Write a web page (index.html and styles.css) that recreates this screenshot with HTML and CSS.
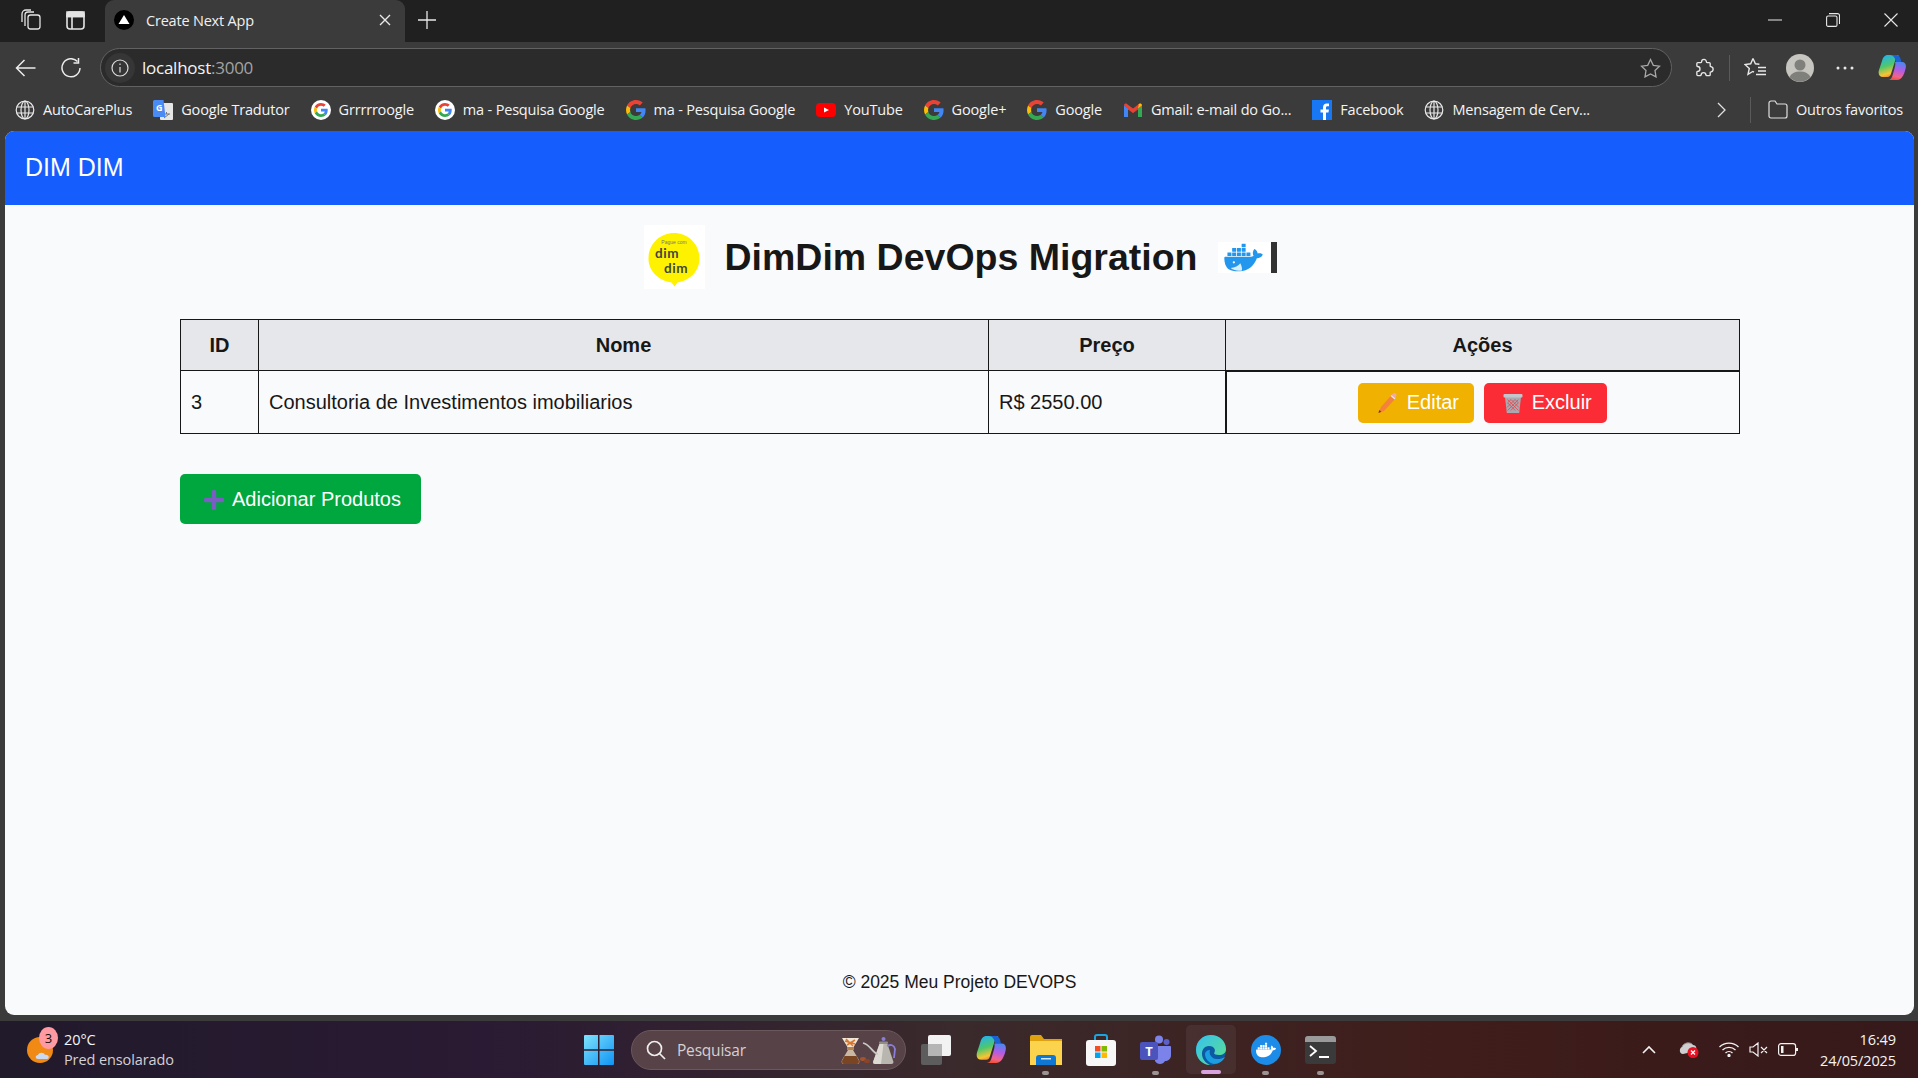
FILE: index.html
```html
<!DOCTYPE html>
<html lang="pt-BR">
<head>
    <meta charset="UTF-8">
    <meta name="viewport" content="width=device-width, initial-scale=1.0">
    <title>Create Next App</title>
    <link rel="stylesheet" href="styles.css">
</head>
<body>
    <svg class="sprites" width="0" height="0">
        <symbol id="g-logo" viewBox="0 0 48 48">
            <path fill="#EA4335" d="M24 9.5c3.54 0 6.71 1.22 9.21 3.6l6.85-6.85C35.9 2.38 30.47 0 24 0 14.62 0 6.51 5.38 2.56 13.22l7.98 6.19C12.43 13.72 17.74 9.5 24 9.5z"/>
            <path fill="#4285F4" d="M46.98 24.55c0-1.57-.15-3.09-.38-4.55H24v9.02h12.94c-.58 2.96-2.26 5.48-4.78 7.18l7.73 6c4.51-4.18 7.09-10.36 7.09-17.65z"/>
            <path fill="#FBBC05" d="M10.53 28.59c-.48-1.45-.76-2.99-.76-4.59s.27-3.14.76-4.59l-7.98-6.19C.92 16.46 0 20.12 0 24c0 3.88.92 7.54 2.56 10.78l7.97-6.19z"/>
            <path fill="#34A853" d="M24 48c6.48 0 11.93-2.13 15.89-5.81l-7.73-6c-2.15 1.45-4.92 2.3-8.16 2.3-6.26 0-11.57-4.22-13.47-9.91l-7.98 6.19C6.51 42.62 14.62 48 24 48z"/>
        </symbol>
        <symbol id="g-round" viewBox="0 0 20 20">
            <circle cx="10" cy="10" r="10" fill="#fff"/>
            <use href="#g-logo" x="3" y="3" width="14" height="14"/>
        </symbol>
        <symbol id="globe" viewBox="0 0 20 20">
            <g fill="none" stroke="#e8e8e8" stroke-width="1.2">
                <circle cx="10" cy="10" r="8.8"/>
                <ellipse cx="10" cy="10" rx="4" ry="8.8"/>
                <path d="M10 1.2v17.6M1.6 7h16.8M1.6 13h16.8"/>
            </g>
        </symbol>
        <symbol id="whale" viewBox="0 0 24 24">
            <path d="M13.983 11.078h2.119a.186.186 0 00.186-.185V9.006a.186.186 0 00-.186-.186h-2.119a.185.185 0 00-.185.185v1.888c0 .102.083.185.185.185m-2.954-5.43h2.118a.186.186 0 00.186-.186V3.574a.186.186 0 00-.186-.185h-2.118a.185.185 0 00-.185.185v1.888c0 .102.082.185.185.186m0 2.716h2.118a.187.187 0 00.186-.186V6.29a.186.186 0 00-.186-.185h-2.118a.185.185 0 00-.185.185v1.887c0 .102.082.185.185.186m-2.93 0h2.12a.186.186 0 00.184-.186V6.29a.185.185 0 00-.185-.185H8.1a.185.185 0 00-.185.185v1.887c0 .102.083.185.185.186m-2.964 0h2.119a.186.186 0 00.185-.186V6.29a.185.185 0 00-.185-.185H5.136a.186.186 0 00-.186.185v1.887c0 .102.084.185.186.186m5.893 2.715h2.118a.186.186 0 00.186-.185V9.006a.186.186 0 00-.186-.186h-2.118a.185.185 0 00-.185.185v1.888c0 .102.082.185.185.185m-2.93 0h2.12a.185.185 0 00.184-.185V9.006a.185.185 0 00-.184-.186h-2.12a.185.185 0 00-.184.185v1.888c0 .102.083.185.185.185m-2.964 0h2.119a.185.185 0 00.185-.185V9.006a.185.185 0 00-.184-.186h-2.12a.186.186 0 00-.186.186v1.887c0 .102.084.185.186.185m-2.92 0h2.12a.185.185 0 00.184-.185V9.006a.185.185 0 00-.184-.186h-2.12a.185.185 0 00-.185.185v1.888c0 .102.082.185.185.185M23.763 9.89c-.065-.051-.672-.51-1.954-.51-.338.001-.676.03-1.01.087-.248-1.7-1.653-2.53-1.716-2.566l-.344-.199-.226.327c-.284.438-.49.922-.612 1.43-.23.97-.09 1.882.403 2.661-.595.332-1.55.413-1.744.42H.751a.751.751 0 00-.75.748 11.376 11.376 0 00.692 4.062c.545 1.428 1.355 2.48 2.41 3.124 1.18.723 3.1 1.137 5.275 1.137.983.003 1.963-.086 2.93-.266a12.248 12.248 0 003.823-1.389c.98-.567 1.86-1.288 2.61-2.136 1.252-1.418 1.998-2.997 2.553-4.4h.221c1.372 0 2.215-.549 2.68-1.009.309-.293.55-.65.707-1.046l.098-.288Z"/>
        </symbol>
        <linearGradient id="copilot-a" x1="0.2" y1="0" x2="0.5" y2="1">
            <stop offset="0" stop-color="#1fb2f6"/>
            <stop offset=".5" stop-color="#4fc76c"/>
            <stop offset=".85" stop-color="#f7c531"/>
            <stop offset="1" stop-color="#f08a3c"/>
        </linearGradient>
        <linearGradient id="copilot-b" x1="0.6" y1="0" x2="0.4" y2="1">
            <stop offset="0" stop-color="#4d86f2"/>
            <stop offset=".45" stop-color="#b65be2"/>
            <stop offset=".8" stop-color="#f0658a"/>
            <stop offset="1" stop-color="#f1503a"/>
        </linearGradient>
        <symbol id="copilot" viewBox="0 0 28 27">
            <path fill="url(#copilot-a)" d="M10 1C6.500 1 5 3.500 4 7L1 16c-1.200 4 .3 7 4 7h4.500c2 0 3-1.500 3.600-3.500L17 7c.8-3 2-5 4-6z"/>
            <path fill="#1a62d6" d="M12 1h6c3 0 4.500 2 5.300 7H18c-1-4-2.500-7-6-7z"/>
            <path fill="url(#copilot-b)" d="M17 8h7c3 0 4.300 2.500 3.800 5.500C27 18 24.500 26 19 26h-9c2.500 0 3.800-2 4.500-4.500l2-7c.5-2 1.300-4.500.5-6.500z"/>
        </symbol>
    </svg>

    <div class="tabstrip">
        <span class="slot">
            <svg width="22" height="22" viewBox="0 0 22 22" fill="none" stroke="#e4e4e4" stroke-width="1.3"><rect x="8" y="6" width="12" height="14" rx="2.500"/><path d="M5 17V6a3 3 0 013-3h6M2 13V5a4 4 0 014-4h5"/></svg>
        </span>
        <span class="slot">
            <svg width="19" height="19" viewBox="0 0 19 19" fill="none" stroke="#e4e4e4" stroke-width="1.6"><rect x="1" y="1" width="17" height="17" rx="3"/><path d="M1 5.500h17M6 5.500V18"/><path d="M1 1h17v4.500H1z" fill="#e4e4e4"/></svg>
        </span>
        <div class="tab">
            <svg class="tab-icon" width="20" height="20" viewBox="0 0 20 20"><circle cx="10" cy="10" r="10" fill="#000"/><path d="M10 5l5.500 9h-11z" fill="#fff"/></svg>
            <span class="tab-title">Create Next App</span>
            <svg width="12" height="12" viewBox="0 0 12 12" stroke="#e8e8e8" stroke-width="1.400"><path d="M1 1l10 10M11 1L1 11"/></svg>
        </div>
        <span class="slot new-tab">
            <svg width="18" height="18" viewBox="0 0 18 18" stroke="#e8e8e8" stroke-width="1.300"><path d="M9 0v18M0 9h18"/></svg>
        </span>
        <div class="spacer"></div>
        <div class="window-controls">
            <span class="win-btn"><svg width="14" height="2" viewBox="0 0 14 2" stroke="#e8e8e8"><path d="M0 1h14"/></svg></span>
            <span class="win-btn"><svg width="14" height="14" viewBox="0 0 14 14" fill="none" stroke="#e8e8e8" stroke-width="1.100"><rect x=".6" y="3" width="10.400" height="10.400" rx="1.500"/><path d="M3 .6h8.500a2 2 0 012 2V11"/></svg></span>
            <span class="win-btn"><svg width="14" height="14" viewBox="0 0 14 14" stroke="#e8e8e8" stroke-width="1.100"><path d="M.5.500l13 13M13.500.500l-13 13"/></svg></span>
        </div>
    </div>

    <div class="toolbar">
        <span class="slot">
            <svg width="21" height="18" viewBox="0 0 21 18" fill="none" stroke="#ececec" stroke-width="1.500"><path d="M20.500 9H1.500M9.500 1l-8 8 8 8"/></svg>
        </span>
        <span class="slot">
            <svg width="20" height="20" viewBox="0 0 20 20" fill="none" stroke="#ececec" stroke-width="1.500"><path d="M16.500 3.500A9 9 0 1019 10"/><path d="M17.500 0v5h-5"/></svg>
        </span>
        <div class="address">
            <span class="site-info">
                <svg width="18" height="18" viewBox="0 0 18 18" fill="none" stroke="#dcdcdc" stroke-width="1.200"><circle cx="9" cy="9" r="8"/><path d="M9 8v5.500M9 4.500v1.500"/></svg>
            </span>
            <span class="url">localhost<span class="url-port">:3000</span></span>
            <svg class="addr-star" width="21" height="20" viewBox="0 0 21 20" fill="none" stroke="#a8a8a8" stroke-width="1.300"><path d="M10.500 1.500l2.800 5.800 6.200.9-4.500 4.400 1 6.300-5.500-3-5.500 3 1-6.300-4.500-4.400 6.200-.9z"/></svg>
        </div>
        <div class="toolbar-right">
            <span class="slot">
                <svg width="20" height="20" viewBox="0 0 21 21" fill="none" stroke="#e8e8e8" stroke-width="1.400"><path d="M8 4a2.500 2.500 0 015 0c0 .5.200.8.700.8H16a1 1 0 011 1v2.500c0 .5.300.7.800.7a2.800 2.800 0 010 5.500c-.5 0-.8.300-.8.800v2.200a1 1 0 01-1 1h-2.800c-.4 0-.6-.3-.7-.7a2.500 2.500 0 00-5 0c-.1.400-.3.700-.7.700H4a1 1 0 01-1-1v-2.700c0-.4.300-.6.700-.7a2.600 2.600 0 000-5.200c-.4 0-.7-.3-.7-.7V5.800a1 1 0 011-1h3.300c.4 0 .7-.3.700-.8z"/></svg>
            </span>
            <span class="tool-divider"></span>
            <span class="slot">
                <svg width="23" height="21" viewBox="0 0 23 21" fill="none" stroke="#e8e8e8" stroke-width="1.400"><path d="M9 1.500l2.400 5.300 4 .4M9 1.500L6.700 6.800l-5.700.7 4.300 3.900-1.300 6 4.800-2.900 1.200.7"/><path d="M14 10.500h8M14 14h8M12 17.500h10"/></svg>
            </span>
            <span class="slot slot-avatar">
                <svg width="28" height="28" viewBox="0 0 28 28"><circle cx="14" cy="14" r="14" fill="#c7c5c0"/><circle cx="14" cy="11" r="5.500" fill="#7f7f7c"/><path d="M3.500 23a11 8 0 0121 0 14 14 0 01-21 0z" fill="#7f7f7c"/></svg>
            </span>
            <span class="slot">
                <svg width="18" height="4" viewBox="0 0 18 4" fill="#e8e8e8"><circle cx="2" cy="2" r="1.500"/><circle cx="9" cy="2" r="1.500"/><circle cx="16" cy="2" r="1.500"/></svg>
            </span>
            <span class="slot slot-copilot">
                <svg width="28" height="27"><use href="#copilot"/></svg>
            </span>
        </div>
    </div>

    <div class="bookmarks">
        <a class="bookmark"><svg width="20" height="20"><use href="#globe"/></svg>AutoCarePlus</a>
        <a class="bookmark">
            <svg width="20" height="20" viewBox="0 0 20 20"><rect x="7" y="3" width="13" height="17" rx="1" fill="#e6e6e6"/><path d="M10 14h7M13.500 12v2M11 18l5-4" stroke="#777" fill="none"/><path d="M1.500 0h9l2 17H1.500A1.500 1.500 0 010 15.500v-14A1.500 1.500 0 011.500 0z" fill="#4a8af4"/><text class="translate-g" x="3" y="11">G</text></svg>
            Google Tradutor
        </a>
        <a class="bookmark"><svg width="20" height="20"><use href="#g-round"/></svg>Grrrrroogle</a>
        <a class="bookmark"><svg width="20" height="20"><use href="#g-round"/></svg>ma - Pesquisa Google</a>
        <a class="bookmark"><svg width="20" height="20"><use href="#g-logo"/></svg>ma - Pesquisa Google</a>
        <a class="bookmark">
            <svg width="20" height="20" viewBox="0 0 20 20"><rect y="3" width="20" height="14" rx="4" fill="#f00"/><path d="M8 7.500l5 2.500-5 2.500z" fill="#fff"/></svg>
            YouTube
        </a>
        <a class="bookmark"><svg width="20" height="20"><use href="#g-logo"/></svg>Google+</a>
        <a class="bookmark"><svg width="20" height="20"><use href="#g-logo"/></svg>Google</a>
        <a class="bookmark">
            <svg width="20" height="20" viewBox="0 0 20 20"><path d="M1 5.500L10 12l9-6.500V17h-4V9.500L10 13 5 9.500V17H1z" fill="#ea4335"/><path d="M1 5.500V17h4V8.500z" fill="#4285f4"/><path d="M15 8.500V17h4V5.500z" fill="#34a853"/><path d="M15 4.500v4l4-3c0-2-2-2.500-3-1.500z" fill="#fbbc05"/><path d="M1 5.500c0-2 2-2.500 3-1.500l6 4.500L16 4l-1 4.500-5 4-9-7z" fill="#ea4335"/></svg>
            Gmail: e-mail do Go...
        </a>
        <a class="bookmark">
            <svg width="20" height="20" viewBox="0 0 20 20"><rect width="20" height="20" fill="#1877f2"/><path d="M14 20v-7.500h2.500l.4-3H14V7.800c0-.9.300-1.500 1.500-1.500H17V3.600c-.3 0-1.200-.1-2.200-.1-2.300 0-3.800 1.400-3.800 3.900v2.100H8.500v3H11V20z" fill="#fff"/></svg>
            Facebook
        </a>
        <a class="bookmark"><svg width="20" height="20"><use href="#globe"/></svg>Mensagem de Cerv...</a>
        <div class="spacer"></div>
        <svg class="more-bookmarks" width="9" height="16" viewBox="0 0 9 16" fill="none" stroke="#e0e0e0" stroke-width="1.300"><path d="M1 1l7 7-7 7"/></svg>
        <span class="tool-divider"></span>
        <a class="bookmark other-favs">
            <svg width="20" height="19" viewBox="0 0 20 19" fill="none" stroke="#e0e0e0" stroke-width="1.200"><path d="M1 5V3a2 2 0 012-2h4l2 3h8a2 2 0 012 2v10a2 2 0 01-2 2H3a2 2 0 01-2-2z"/></svg>
            Outros favoritos
        </a>
    </div>

    <div class="page-frame">
        <div class="page">
            <header class="app-header">DIM DIM</header>
            <main class="content">
                <div class="title-row">
                    <svg class="logo" width="61" height="64" viewBox="0 0 61 64">
                        <rect width="61" height="64" fill="#fff"/>
                        <path d="M30 8c14 0 25.500 11 25.500 25.500 0 13-10 22-22 24l-3 4-3-4C15 55.500 4.500 46.500 4.500 33.500 4.500 19 16 8 30 8z" fill="#fff200"/>
                        <text class="logo-small" x="30" y="19">Pague com</text>
                        <text class="logo-text" x="23" y="33">dim</text>
                        <text class="logo-text" x="32" y="48">dim</text>
                    </svg>
                    <h1 class="title">DimDim DevOps Migration</h1>
                    <span class="docker-box">
                        <svg width="39" height="29" viewBox="0 3 24 18" fill="#2396ed"><use href="#whale" width="24" height="24"/><path d="M4 18.500c2.500-.3 5-1.400 6-3 .8 1.500 1.300 3 1 4.500-2.500.5-5 0-7-1.500z" fill="#d8eefb"/><circle cx="6" cy="15" r=".7" fill="#fff"/></svg>
                    </span>
                    <span class="text-cursor"></span>
                </div>

                <table class="products">
                    <thead>
                        <tr>
                            <th class="col-id">ID</th>
                            <th class="col-name">Nome</th>
                            <th class="col-price">Preço</th>
                            <th class="col-actions">Ações</th>
                        </tr>
                    </thead>
                    <tbody>
                        <tr>
                            <td>3</td>
                            <td>Consultoria de Investimentos imobiliarios</td>
                            <td>R$ 2550.00</td>
                            <td class="cell-actions">
                                <div class="action-buttons">
                                    <button class="btn btn-edit">
                                        <svg width="22" height="22" viewBox="0 0 22 22"><path d="M15.500 3l4 3.500L8 19l-5.500 2L5 15z" fill="#f5823c"/><path d="M15.500 3l1.500-1.500c1-.8 2-.8 2.800 0 .8.800 1 2 .2 3L19.500 6.500z" fill="#f3a6a6"/><path d="M14.500 4l4 3.500 1-1-4-3.500z" fill="#e6e6e6"/><path d="M2.500 21l.8-3 2 1.800z" fill="#5a3a2a"/></svg>
                                        Editar
                                    </button>
                                    <button class="btn btn-delete">
                                        <svg width="22" height="22" viewBox="0 0 22 22"><path d="M3 5h16l-1.800 16H4.800z" fill="#a9a9b2"/><path d="M5.500 7.500l11 11M9 7.500l8 8M13 7.500l3.600 3.600M5.800 11l7.500 7.500M16.500 7.500l-11 11M13 7.500l-8 8M9 7.500L5.400 11M16.200 11l-7.500 7.500" stroke="#e5484d" stroke-width=".8" fill="none"/><rect x="1.500" y="2" width="19" height="3.500" rx="1" fill="#c4c4cc"/></svg>
                                        Excluir
                                    </button>
                                </div>
                            </td>
                        </tr>
                    </tbody>
                </table>

                <button class="btn btn-add">
                    <svg width="20" height="20" viewBox="0 0 20 20" fill="#7a5ec4"><rect x="7.800" width="4.400" height="20" rx="1.500"/><rect y="7.800" width="20" height="4.400" rx="1.500"/></svg>
                    Adicionar Produtos
                </button>
            </main>
            <footer class="app-footer">© 2025 Meu Projeto DEVOPS</footer>
        </div>
    </div>

    <div class="taskbar">
        <div class="task-left">
            <span class="weather-icon">
                <svg width="32" height="32" viewBox="0 0 32 32"><circle cx="15" cy="16" r="13" fill="#f08a14"/><path d="M13 25c-3 0-3-4 0-4 1-3 6-3 7 0 4-1 5 4 2 4z" fill="#c9daf2"/></svg>
                <span class="weather-badge">3</span>
            </span>
            <div class="weather-text">
                <span class="weather-temp">20°C</span>
                <span class="weather-desc">Pred ensolarado</span>
            </div>
        </div>

        <div class="task-center">
            <svg class="start" width="30" height="30" viewBox="0 0 30 30">
                <defs><linearGradient id="win" x1="0" y1="0" x2="1" y2="1"><stop offset="0" stop-color="#7fe3fb"/><stop offset="1" stop-color="#0f93f5"/></linearGradient></defs>
                <path fill="url(#win)" d="M0 1a1 1 0 011-1h13v14.300H0zM15.500 0H29a1 1 0 011 1v13.300H15.500zM0 15.700h14V30H1a1 1 0 01-1-1zM15.500 15.700H30V29a1 1 0 01-1 1H15.500z"/>
            </svg>
            <div class="search">
                <svg width="20" height="20" viewBox="0 0 20 20" fill="none" stroke="#eee" stroke-width="1.700"><circle cx="8.500" cy="8.500" r="7"/><path d="M13.500 13.500l5.500 5.500"/></svg>
                <span class="search-label">Pesquisar</span>
                <svg class="search-art" width="56" height="30" viewBox="0 0 56 30">
                    <path d="M1 3h17l-6 10H7z" fill="#efe6d8"/>
                    <path d="M4 6l10 3M14 5L6 10M5 4l7 7" stroke="#d8762c" stroke-width="1.500" fill="none"/>
                    <rect x="6" y="12" width="7" height="3" fill="#b9824a"/>
                    <path d="M7 15h5l6 10c1 2.500 0 4-2 4H3c-2 0-3-1.500-2-4z" fill="#c9b8a4"/>
                    <path d="M3.500 21h12l2.300 4.500c.6 2-.3 3.500-1.800 3.500H3c-1.500 0-2.400-1.500-1.800-3.500z" fill="#7a4522"/>
                    <ellipse cx="22" cy="24" rx="3" ry="2" fill="#a5522e"/>
                    <ellipse cx="26" cy="26" rx="3" ry="2" fill="#8c4426"/>
                    <path d="M38.500 9h8l6 18a2 2 0 01-2 2H34a2 2 0 01-2-2z" fill="#b8b6ae"/>
                    <path d="M38.500 9h4L40 29h-6a2 2 0 01-2-2z" fill="#dcdad2"/>
                    <path d="M37 19C32 19 30 10 22 8" stroke="#c9c8c2" stroke-width="1.800" fill="none"/>
                    <path d="M46 11c4-2 7-1 8 3l-1 9" stroke="#8a7fd8" stroke-width="1.800" fill="none"/>
                    <rect x="38" y="6.500" width="9" height="2.500" rx="1" fill="#8f8d88"/>
                    <circle cx="42.500" cy="4" r="2" fill="#8a7fd8"/>
                </svg>
            </div>
            <span class="task-item">
                <svg width="30" height="30" viewBox="0 0 30 30"><rect y="9" width="21" height="21" rx="2" fill="#5d5d5d"/><rect x="7" width="23" height="21" rx="2" fill="#f2f2f2"/><rect x="7" y="9" width="14" height="12" fill="#b5b5b5"/></svg>
            </span>
            <span class="task-item">
                <svg width="30" height="29"><use href="#copilot"/></svg>
            </span>
            <span class="task-item is-open">
                <svg width="32" height="30" viewBox="0 0 32 30"><path d="M0 2a2 2 0 012-2h9l3 4h18v26H0z" fill="#e0a10e"/><rect y="6" width="32" height="24" fill="#fcd34d"/><path d="M6 30v-7a3 3 0 013-3h14a3 3 0 013 3v7z" fill="#0f78d4"/><rect x="11" y="23" width="10" height="1.500" fill="#cfe8fb"/></svg>
            </span>
            <span class="task-item">
                <svg width="30" height="32" viewBox="0 0 30 32"><path d="M9 9V3a2 2 0 012-2h8a2 2 0 012 2v6" fill="none" stroke="#1aa5e0" stroke-width="2"/><rect y="6" width="30" height="26" rx="3" fill="#f7f7f7"/><rect x="9" y="12" width="5.500" height="5.500" fill="#f25022"/><rect x="15.500" y="12" width="5.500" height="5.500" fill="#7fba00"/><rect x="9" y="18.500" width="5.500" height="5.500" fill="#00a4ef"/><rect x="15.500" y="18.500" width="5.500" height="5.500" fill="#ffb900"/></svg>
            </span>
            <span class="task-item is-open">
                <svg width="31" height="30" viewBox="0 0 31 30"><circle cx="19" cy="4.500" r="4" fill="#7b83eb"/><circle cx="26.500" cy="7" r="3" fill="#5b5fc7"/><path d="M15 11h15a1 1 0 011 1v8c0 4-3 6-6 6-2 4-8 4-10 0z" fill="#7b83eb"/><rect y="7" width="18" height="18" rx="2" fill="#4b53bc"/><text class="teams-t" x="9" y="21">T</text></svg>
            </span>
            <span class="task-active">
                <svg width="30" height="30" viewBox="0 0 30 30">
                    <defs><linearGradient id="edge-a" x1="0" y1="0" x2="1" y2="1"><stop offset="0" stop-color="#35c1f1"/><stop offset="1" stop-color="#5ee08a"/></linearGradient></defs>
                    <circle cx="15" cy="15" r="15" fill="#0c59a4"/>
                    <path d="M0 15C0 6 7 0 15 0c8 0 15 6 15 14 0 4-3 6-7 6-3 0-5-1-5-2 2-2 1-7-5-7-5 0-7 4-7 8 0 4 3 9 8 11C6 30 0 23 0 15z" fill="url(#edge-a)"/>
                    <path d="M9 19c0 5 4 9 9 10 5 0 9-3 11-7-3 2-9 3-12 1-3-2-4-5-3-8-3 0-5 2-5 4z" fill="#1b9de2"/>
                </svg>
            </span>
            <span class="task-item is-open">
                <svg width="30" height="30" viewBox="0 0 30 30"><circle cx="15" cy="15" r="15" fill="#1d8ce8"/><svg x="5" y="5" width="20" height="20" fill="#fff"><use href="#whale"/></svg></svg>
            </span>
            <span class="task-item is-open">
                <svg width="31" height="30" viewBox="0 0 31 30"><rect y="1" width="31" height="28" rx="3" fill="#3a3a3a"/><path d="M3 1h25a3 3 0 013 3v3H0V4a3 3 0 013-3z" fill="#9a9a9a"/><path d="M5 11l6 5-6 5" fill="none" stroke="#fff" stroke-width="1.800"/><path d="M14 22h10" stroke="#fff" stroke-width="2"/></svg>
            </span>
        </div>

        <div class="task-right">
            <svg class="tray-chevron" width="14" height="9" viewBox="0 0 14 9" fill="none" stroke="#f2f2f2" stroke-width="1.600"><path d="M1 8l6-6 6 6"/></svg>
            <svg class="tray-cloud" width="20" height="17" viewBox="0 0 20 17"><path d="M4 13C0 13 0 7 3 6c1-4 8-6 11-2 3 0 4 3 3 6z" fill="#cfcfcf"/><path d="M3 6c1-4 8-6 11-2" fill="none" stroke="#8a8a8a"/><circle cx="14" cy="11.500" r="5.500" fill="#e81123"/><path d="M12 9.500l4 4M16 9.500l-4 4" stroke="#fff" stroke-width="1.300"/></svg>
            <svg width="20" height="15" viewBox="0 0 20 15" fill="none" stroke="#f2f2f2" stroke-width="1.300"><path d="M.5 5a13.500 13.500 0 0119 0M3.500 8a9.500 9.500 0 0113 0M6.500 11a5 5 0 017 0"/><circle cx="10" cy="13.500" r="1" fill="#f2f2f2"/></svg>
            <svg width="19" height="15" viewBox="0 0 19 15" fill="none" stroke="#f2f2f2" stroke-width="1.200"><path d="M1 5v5h3l5 4V1L4 5zM12 5l6 6M18 5l-6 6"/></svg>
            <svg width="20" height="13" viewBox="0 0 20 13" fill="none" stroke="#f2f2f2" stroke-width="1.200"><rect x=".6" y=".6" width="17" height="11.800" rx="2.500"/><rect x="3" y="3" width="2.500" height="7" fill="#f2f2f2" stroke="none"/><path d="M19 5v3" stroke-width="2"/></svg>
            <div class="clock">
                <span>16:49</span>
                <span>24/05/2025</span>
            </div>
        </div>
    </div>
</body>
</html>
```

FILE: styles.css
```css
/* Janela do navegador */
body {
    margin: 0;
    height: 1078px;
    overflow: hidden;
    display: flex;
    flex-direction: column;
    background: #3b3b3b;
    color: #171717;
    font-family: "Liberation Sans", Arial, sans-serif;
}

svg {
    display: block;
    flex: none;
}

.sprites {
    position: absolute;
}

.spacer {
    flex: 1;
}

.slot {
    width: 45px;
    display: flex;
    align-items: center;
    justify-content: center;
    flex: none;
}

.tabstrip {
    height: 42px;
    flex: none;
    display: flex;
    align-items: center;
    padding: 0 0 2px 8px;
    box-sizing: border-box;
    background: #202020;
    font-family: "Open Sans", sans-serif;
    color: #f0f0f0;
}

.tab {
    width: 300px;
    height: 42px;
    margin: 0 0 -2px 7px;
    padding: 0 14px 2px 9px;
    box-sizing: border-box;
    display: flex;
    align-items: center;
    background: #3b3b3b;
    border-radius: 9px 9px 0 0;
}

.tab-title {
    flex: 1;
    margin-left: 12px;
    font-size: 14.5px;
    letter-spacing: -0.2px;
}

.new-tab {
    width: 44px;
}

.window-controls {
    display: flex;
    margin-right: -2px;
}

.win-btn {
    width: 58px;
    display: flex;
    justify-content: center;
    align-items: center;
}

.toolbar {
    height: 46px;
    flex: none;
    display: flex;
    align-items: center;
    padding: 5px 0 0 3px;
    box-sizing: border-box;
    background: #3b3b3b;
}

.address {
    flex: 1;
    height: 39px;
    margin-left: 7px;
    padding: 0 10px 0 4px;
    box-sizing: border-box;
    display: flex;
    align-items: center;
    background: #2b2b2b;
    border: 1px solid #626262;
    border-radius: 20px;
    font-family: "Open Sans", sans-serif;
}

.site-info {
    width: 30px;
    height: 30px;
    display: flex;
    align-items: center;
    justify-content: center;
    background: #363636;
    border-radius: 50%;
}

.url {
    flex: 1;
    margin-left: 7px;
    font-size: 17px;
    letter-spacing: -0.25px;
    color: #f4f4f4;
}

.url-port {
    color: #a3a3a3;
}

.toolbar-right {
    display: flex;
    align-items: center;
    margin-left: 9px;
    padding-right: 4px;
}

.slot-avatar {
    margin-left: -1px;
}

.slot-copilot {
    margin-left: 2px;
}

.tool-divider {
    width: 1px;
    height: 26px;
    margin: 0 3px;
    background: #5a5a5a;
    flex: none;
}

.bookmarks {
    height: 43px;
    flex: none;
    display: flex;
    align-items: center;
    gap: 21px;
    padding: 0 15px;
    box-sizing: border-box;
    background: #3b3b3b;
    font-family: "Open Sans", sans-serif;
    font-size: 14.5px;
    letter-spacing: -0.18px;
    color: #f4f4f4;
}

.bookmark {
    display: flex;
    align-items: center;
    gap: 8px;
    white-space: nowrap;
}

.other-favs {
    margin-left: -7px;
}

.translate-g {
    font: bold 9px "Open Sans", sans-serif;
    fill: #fff;
}

/* Página */
.page-frame {
    flex: 1;
    min-height: 0;
    padding: 0 4px 6px 5px;
}

.page {
    height: 100%;
    display: flex;
    flex-direction: column;
    background: #f9fafb;
    border-radius: 9px;
    overflow: hidden;
}

.app-header {
    height: 74px;
    flex: none;
    display: flex;
    align-items: center;
    padding: 0 0 2px 20px;
    box-sizing: border-box;
    background: #155dfc;
    color: #fff;
    font-size: 25px;
}

.content {
    flex: 1;
    padding: 20px 175px 0;
}

.title-row {
    display: flex;
    align-items: center;
    justify-content: center;
    height: 64px;
    margin-left: 2px;
}

.logo-small {
    font-size: 5px;
    fill: #777;
    text-anchor: middle;
}

.logo-text {
    font-size: 13.5px;
    font-weight: 700;
    letter-spacing: 0.6px;
    fill: #444;
    text-anchor: middle;
    font-family: "Lato", sans-serif;
}

.title {
    margin: 0 0 0 20px;
    font-size: 37.5px;
    line-height: 1.2;
    font-weight: 700;
}

.docker-box {
    width: 53px;
    height: 31px;
    margin-left: 21px;
    padding-left: 6px;
    box-sizing: border-box;
    display: flex;
    align-items: center;
    background: #fff;
}

.text-cursor {
    width: 6px;
    height: 31px;
    background: #333;
}

.products {
    width: 1560px;
    margin-top: 30px;
    border-collapse: collapse;
    table-layout: fixed;
    font-size: 20px;
}

.products th,
.products td {
    border: 1px solid #171717;
    padding: 1px 10px 0;
    box-sizing: border-box;
}

.products th {
    height: 51px;
    background: #e5e7eb;
    font-weight: 700;
}

.products td {
    height: 63px;
}

.col-id {
    width: 78px;
}

.col-name {
    width: 730px;
}

.col-price {
    width: 237px;
}

.products .col-actions {
    border-bottom-width: 2px;
}

.products .cell-actions {
    border-left-width: 2px;
}

.action-buttons {
    display: flex;
    justify-content: center;
    gap: 10px;
    margin-left: -1px;
}

.btn {
    display: inline-flex;
    align-items: center;
    border: none;
    border-radius: 5px;
    color: #fff;
    font-family: inherit;
    font-size: 20px;
    padding: 0;
}

.btn-edit {
    height: 40px;
    width: 116px;
    padding-left: 18px;
    gap: 9px;
    background: #f0b100;
}

.btn-delete {
    height: 40px;
    width: 123px;
    padding-left: 18px;
    gap: 8px;
    background: #fb2c36;
}

.btn-add {
    height: 50px;
    width: 241px;
    margin-top: 40px;
    padding: 1px 0 0 24px;
    gap: 8px;
    background: #00a63e;
}

.app-footer {
    height: 43px;
    flex: none;
    text-align: center;
    font-size: 17.5px;
    line-height: 20px;
}

/* Barra de tarefas */
.taskbar {
    height: 57px;
    flex: none;
    display: flex;
    align-items: center;
    background: linear-gradient(90deg, #211a2b 0%, #2a1a33 25%, #3a2a2c 50%, #3f1d1a 75%, #36191a 100%);
    font-family: "Open Sans", sans-serif;
    color: #f4f4f4;
}

.task-left {
    flex: 1;
    display: flex;
    align-items: center;
    padding-left: 25px;
}

.weather-icon {
    position: relative;
    width: 32px;
    height: 32px;
}

.weather-badge {
    position: absolute;
    top: -7px;
    left: 14px;
    width: 19px;
    height: 22px;
    border-radius: 50%;
    background: #ff9aa2;
    color: #111;
    font-size: 13px;
    line-height: 22px;
    text-align: center;
}

.weather-text {
    display: flex;
    flex-direction: column;
    margin-left: 7px;
    font-size: 14.5px;
    line-height: 20px;
    letter-spacing: -0.1px;
}

.weather-desc {
    color: #d4d0d4;
}

.task-center {
    display: flex;
    align-items: center;
    margin-left: 11px;
}

.search {
    width: 275px;
    height: 40px;
    margin: 0 2px 0 17px;
    padding: 0 8px 0 14px;
    box-sizing: border-box;
    display: flex;
    align-items: center;
    background: #564247;
    border: 1px solid #6a585c;
    border-radius: 20px;
}

.search-label {
    flex: 1;
    margin-left: 11px;
    font-size: 15.5px;
    letter-spacing: -0.2px;
    color: #d6d0d2;
}

.task-item,
.task-active {
    position: relative;
    width: 55px;
    height: 49px;
    display: flex;
    align-items: center;
    justify-content: center;
    box-sizing: border-box;
}

.task-item.is-open::after {
    content: "";
    position: absolute;
    bottom: -1px;
    left: 24px;
    width: 7px;
    height: 4px;
    border-radius: 2px;
    background: #9c9494;
}

.task-active {
    width: 50px;
    margin: 0 2.5px;
    background: rgba(255, 255, 255, 0.06);
    border-radius: 5px;
}

.task-active::after {
    content: "";
    position: absolute;
    bottom: 0;
    left: 15px;
    width: 20px;
    height: 4px;
    border-radius: 2px;
    background: #d9a3e0;
}

.teams-t {
    font: bold 13px "Open Sans", sans-serif;
    fill: #fff;
    text-anchor: middle;
}

.task-right {
    flex: 1;
    display: flex;
    align-items: center;
    justify-content: flex-end;
    gap: 10px;
    padding-right: 22px;
}

.tray-chevron {
    margin-right: 13px;
}

.tray-cloud {
    margin-right: 10px;
}

.clock {
    display: flex;
    flex-direction: column;
    align-items: flex-end;
    margin-left: 12px;
    font-size: 14.5px;
    line-height: 21px;
    letter-spacing: -0.1px;
}
```
